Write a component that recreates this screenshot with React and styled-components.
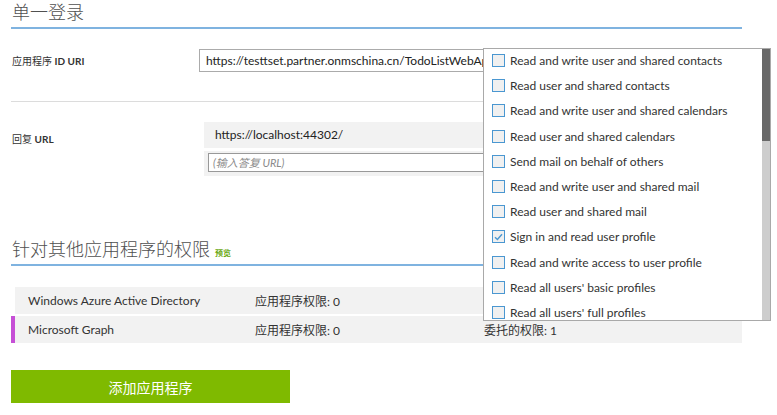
import React from 'react';
import styled, { createGlobalStyle } from 'styled-components';

const GlobalStyle = createGlobalStyle`
  body {
    margin: 0;
    background: #fff;
    font-family: "Segoe UI", Lato, "Noto Sans CJK SC", sans-serif;
    color: #333;
  }
`;

const Page = styled.div`
  position: relative;
  width: 777px;
  height: 415px;
  overflow: hidden;
`;

const Content = styled.div`
  width: 731px;
  padding-left: 11px;
`;

const SectionTitle = styled.h2`
  margin: 0;
  font-size: 18px;
  font-weight: 300;
  line-height: 24px;
  color: #505050;
  padding-left: 1px;
  height: 27px;
  border-bottom: 2px solid #7fb3e0;
  display: flex;
  align-items: baseline;
  gap: 5px;
`;

const Preview = styled.span`
  font-size: 8px;
  color: #6aa812;
  font-weight: 600;
`;

const FieldRow = styled.div`
  display: flex;
  align-items: ${(p) => p.$align || 'center'};
  padding: ${(p) => p.$pad || '0'};
`;

const Label = styled.div`
  width: ${(p) => p.$w || 187}px;
  flex: none;
  padding-left: 1px;
  padding-top: ${(p) => p.$pt || 0}px;
  font-size: 10px;
  color: #333;
`;

const Strong = styled.span`
  font-weight: 700;
`;

const TextInput = styled.div`
  width: 380px;
  height: 21px;
  border: 1px solid #ababab;
  font-size: 12px;
  line-height: 21px;
  padding-left: 6px;
  color: #222;
  white-space: nowrap;
  overflow: hidden;
`;

const Divider = styled.div`
  height: 1px;
  background: #dcdcdc;
  margin: 29px 0 20px;
`;

const UrlList = styled.div`
  display: flex;
  flex-direction: column;
  gap: 3px;
`;

const UrlItem = styled.div`
  width: 360px;
  height: 26px;
  background: #f2f2f2;
  font-size: 12px;
  line-height: 26px;
  padding-left: 11px;
  color: #222;
`;

const UrlInputWrap = styled.div`
  width: 367px;
  height: 25px;
  background: #f2f2f2;
  padding: 2px 4px;
  box-sizing: border-box;
`;

const UrlInput = styled.div`
  height: 19px;
  border: 1px solid #999;
  box-sizing: border-box;
  background: #fff;
  font-size: 11px;
  font-style: italic;
  line-height: 17px;
  padding-left: 4px;
  color: #8a8a8a;
`;

const Table = styled.div`
  margin-top: 21px;
  display: flex;
  flex-direction: column;
  gap: 2px;
`;

const TableRow = styled.div`
  display: flex;
  height: 27px;
  align-items: center;
  background: #f2f2f2;
  font-size: 12px;
  color: #333;
  border-left: 4px solid ${(p) => (p.$active ? '#c64fd6' : '#fff')};
`;

const Cell = styled.div`
  box-sizing: border-box;
  width: ${(p) => p.$w}px;
  flex: none;
  padding-left: ${(p) => p.$pl || 0}px;
  white-space: nowrap;
`;

const AddButton = styled.button`
  margin-top: 27px;
  width: 279px;
  height: 33px;
  border: none;
  background: #7fba00;
  color: #fff;
  font-family: inherit;
  font-size: 14px;
  display: block;
`;

const Dropdown = styled.div`
  position: absolute;
  left: 483px;
  top: 48px;
  width: 286px;
  height: 271px;
  border: 1px solid #a9a9a9;
  background: #fff;
  display: flex;
  overflow: hidden;
`;

const OptionList = styled.div`
  flex: 1;
  margin-top: -1px;
  padding-left: 8px;
  display: flex;
  flex-direction: column;
`;

const Option = styled.label`
  display: flex;
  align-items: center;
  gap: 5px;
  height: 25.2px;
  flex: none;
  font-size: 12px;
  color: #333;
  white-space: nowrap;
`;

const Box = styled.span`
  width: 13px;
  height: 13px;
  box-sizing: border-box;
  border: 1.5px solid #4a97d1;
  background: #f0f0f0;
  flex: none;
  display: flex;
  align-items: center;
  justify-content: center;
`;

const ScrollTrack = styled.div`
  width: 8px;
  background: #cdcdcd;
  display: flex;
  flex-direction: column;
`;

const ScrollThumb = styled.div`
  height: 92px;
  background: #686868;
`;

const options = [
  'Read and write user and shared contacts',
  'Read user and shared contacts',
  'Read and write user and shared calendars',
  'Read user and shared calendars',
  'Send mail on behalf of others',
  'Read and write user and shared mail',
  'Read user and shared mail',
  'Sign in and read user profile',
  'Read and write access to user profile',
  "Read all users' basic profiles",
  "Read all users' full profiles",
];

const Check = () => (
  <svg width="9" height="8" viewBox="0 0 9 8">
    <path d="M1 4.2 L3.4 6.5 L8 1.2" fill="none" stroke="#4a97d1" strokeWidth="1.4" />
  </svg>
);

export default function App() {
  return (
    <Page>
      <GlobalStyle />
      <Content>
        <SectionTitle>单一登录</SectionTitle>
        <FieldRow $pad="20px 0 0">
          <Label>应用程序 <Strong>ID URI</Strong></Label>
          <TextInput>https://testtset.partner.onmschina.cn/TodoListWebApp</TextInput>
        </FieldRow>
        <Divider />
        <FieldRow $align="flex-start">
          <Label $w={192} $pt={9}>回复 <Strong>URL</Strong></Label>
          <UrlList>
            <UrlItem>https://localhost:44302/</UrlItem>
            <UrlInputWrap>
              <UrlInput>(输入答复 URL)</UrlInput>
            </UrlInputWrap>
          </UrlList>
        </FieldRow>
        <SectionTitle style={{ marginTop: 61 }}>
          针对其他应用程序的权限<Preview>预览</Preview>
        </SectionTitle>
        <Table>
          <TableRow>
            <Cell $w={240} $pl={13}>Windows Azure Active Directory</Cell>
            <Cell $w={229}>应用程序权限: 0</Cell>
          </TableRow>
          <TableRow $active>
            <Cell $w={240} $pl={13}>Microsoft Graph</Cell>
            <Cell $w={229}>应用程序权限: 0</Cell>
            <Cell $w={200}>委托的权限: 1</Cell>
          </TableRow>
        </Table>
        <AddButton>添加应用程序</AddButton>
      </Content>
      <Dropdown>
        <OptionList>
          {options.map((o, i) => (
            <Option key={o}>
              <Box>{i === 7 && <Check />}</Box>
              <span>{o}</span>
            </Option>
          ))}
        </OptionList>
        <ScrollTrack>
          <ScrollThumb />
        </ScrollTrack>
      </Dropdown>
    </Page>
  );
}
